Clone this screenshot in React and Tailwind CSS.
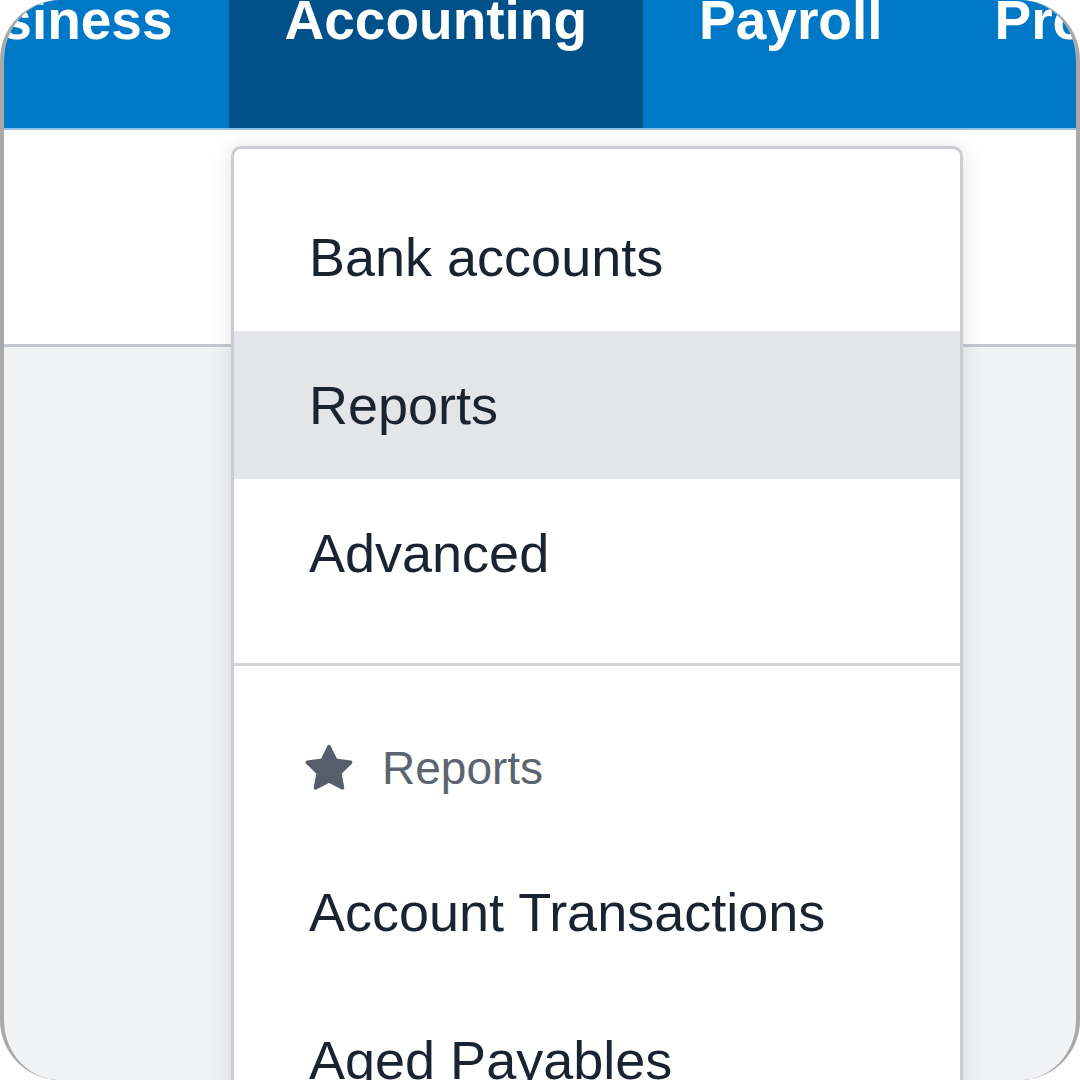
import React from 'react';

// Top navigation tabs
const tabs = [
  { label: 'Business', active: false },
  { label: 'Accounting', active: true },
  { label: 'Payroll', active: false },
  { label: 'Projects', active: false },
];

const StarIcon = () => (
  <svg width="54" height="54" viewBox="0 0 24 24" className="shrink-0">
    <polygon
      points="12,2.5 15,8.6 21.6,9.5 16.8,14.2 18,20.8 12,17.7 6,20.8 7.2,14.2 2.4,9.5 9,8.6"
      fill="#565e6c"
      stroke="#565e6c"
      strokeWidth="1.6"
      strokeLinejoin="round"
    />
  </svg>
);

const MenuItem = ({ children, active }) => (
  <div
    className={`h-[148px] flex items-center pl-[75px] text-[54px] text-[#1a2330] ${
      active ? 'bg-[#e4e5e8]' : ''
    }`}
  >
    {children}
  </div>
);

export default function App() {
  return (
    <div className="relative w-[1080px] h-[1080px] overflow-hidden rounded-[60px] border-x-4 border-[#a9a9a9] bg-[#f1f2f4] font-['Liberation_Sans',Arial,sans-serif]">
      {/* Nav bar */}
      <nav className="h-[130px] bg-[#0078c8] border-b-2 border-[#8dc3ea] flex ml-[-132px] whitespace-nowrap">
        {tabs.map((t) => (
          <div
            key={t.label}
            className={`h-full px-[56px] text-white font-bold text-[55px] ${
              t.active ? 'bg-[#005189]' : ''
            }`}
          >
            <span className="block mt-[-7px] leading-[55px]">{t.label}</span>
          </div>
        ))}
      </nav>

      {/* White band under nav */}
      <div className="h-[217px] bg-white border-b-[3px] border-[#c5c9cf]" />

      {/* Dropdown menu */}
      <div className="absolute left-[227px] top-[146px] w-[732px] bg-white border-[3px] border-b-0 border-[#cbcdd2] rounded-t-[10px] shadow-[0_2px_22px_rgba(0,0,0,0.12)] pt-[34px]">
        <MenuItem>Bank accounts</MenuItem>
        <MenuItem active>Reports</MenuItem>
        <MenuItem>Advanced</MenuItem>
        <div className="h-[36px]" />
        <div className="h-[3px] bg-[#d2d4d8]" />
        <div className="h-[32px]" />
        <div className="h-[140px] flex items-center pl-[68px] gap-[26px]">
          <StarIcon />
          <span className="text-[46px] text-[#5b6470]">Reports</span>
        </div>
        <MenuItem>Account Transactions</MenuItem>
        <MenuItem>Aged Payables</MenuItem>
      </div>
    </div>
  );
}
